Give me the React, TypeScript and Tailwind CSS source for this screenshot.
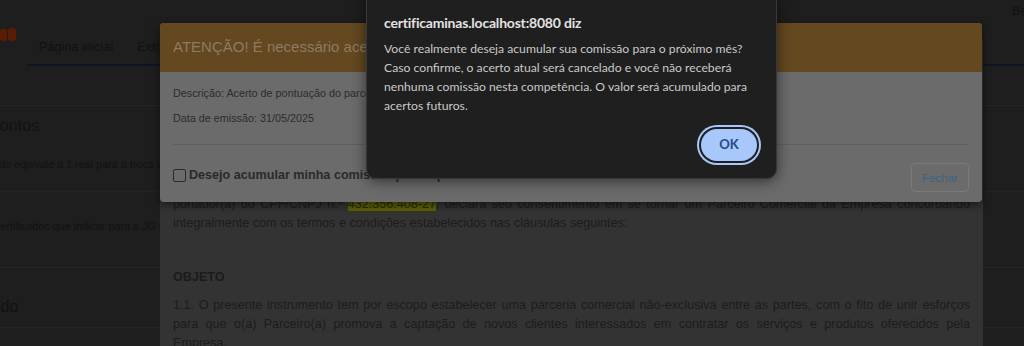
import React from "react";

const docLine = "[text-align-last:justify] text-justify whitespace-nowrap";

export default function App() {
  return (
    <div className="relative w-[1024px] h-[346px] overflow-hidden bg-[#1e1e1e] font-['Liberation_Sans',Arial,sans-serif]">
      {/* underlying page */}
      <div className="h-[22px] pl-[1012px] pt-[2px] text-[12.6px] leading-[18px] text-[#111] whitespace-nowrap">
        Bem-vindo
      </div>
      <div className="flex h-[44px]">
        <div className="w-[27px] pt-[6px]">
          <svg width="17" height="13" viewBox="0 0 17 13">
            <rect x="0" y="1" width="7" height="12" rx="2" fill="#5a1c02" />
            <rect x="8" y="0" width="8" height="13" rx="3" fill="#5a1c02" />
          </svg>
        </div>
        <nav className="flex flex-1 items-end border-b-2 border-[#0d1620] text-[12.6px] text-[#111]">
          <div className="px-[12px] pb-[8px] leading-[18px]">Página inicial</div>
          <div className="px-[12px] pb-[8px] leading-[18px]">Extrato</div>
        </nav>
      </div>
      <div className="h-[39px]" />
      <div className="border-t border-[#252525] h-[162px] text-[#121212] whitespace-nowrap">
        <div className="ml-[-11px] mt-[8px] text-[16.2px] leading-[22px]">Pontos</div>
        <div className="ml-[-1px] mt-[20px] text-[10.8px] leading-[16px]">do equivale a 1 real para a troca de pontos</div>
        <div className="mt-[19px] border-t border-[#222]" />
        <div className="ml-[-5px] mt-[26px] text-[10.8px] leading-[16px]">certificados que indicar para a JG Certificados</div>
      </div>
      <div className="border-t border-[#252525] h-[60px] text-[#121212] whitespace-nowrap">
        <div className="ml-[-23px] mt-[27px] text-[16.2px] leading-[22px]">Saldo</div>
      </div>
      <div className="border-t border-[#252525]" />

      {/* contract panel */}
      <div className="absolute left-[160px] top-[40px] w-[823px] h-[320px] bg-[#333333] px-[13px] pt-[155px] text-[12.6px] leading-[19px] text-[#1c1c1c]">
        <div className={docLine}>
          portador(a) do CPF/CNPJ n.º{" "}
          <span className="bg-[#5e5e06] text-[#2b2b00]">432.356.408-27</span>, declara seu consentimento em se tornar um Parceiro Comercial da Empresa concordando
        </div>
        <div>integralmente com os termos e condições estabelecidos nas cláusulas seguintes:</div>
        <div className="mt-[35px] font-bold leading-[19px]">OBJETO</div>
        <div className="mt-[9px]">
          <div className={docLine}>
            1.1. O presente instrumento tem por escopo estabelecer uma parceria comercial não-exclusiva entre as partes, com o fito de unir esforços
          </div>
          <div className={docLine}>
            para que o(a) Parceiro(a) promova a captação de novos clientes interessados em contratar os serviços e produtos oferecidos pela
          </div>
          <div>Empresa.</div>
        </div>
      </div>

      {/* main modal */}
      <div className="absolute left-[160px] top-[23px] w-[822px] h-[179px] overflow-hidden rounded-[4px] bg-[#6b6b6b] shadow-[0_3px_9px_rgba(0,0,0,0.5)]">
        <div className="flex h-[49px] items-center bg-[#634820] px-[13px] text-[15px] text-[#8c7b62] whitespace-nowrap">
          ATENÇÃO! É necessário aceitar o contrato para receber a comissão
        </div>
        <div className="px-[13px] text-[10.8px] leading-[16px] text-[#2c2c2c]">
          <div className="pt-[13px] whitespace-nowrap">Descrição: Acerto de pontuação do parceiro referente ao mês de maio</div>
          <div className="pt-[9px]">Data de emissão: 31/05/2025</div>
          <div className="mt-[18px] border-t border-[#5f5f5f]" />
          <div className="flex items-start justify-between pt-[18px]">
            <label className="mt-[4px] flex items-center gap-[3px] text-[12.6px] font-bold leading-[16px] text-[#2a2a2a] whitespace-nowrap">
              <span className="block h-[13px] w-[13px] rounded-[2px] border border-[#2b2b2b]" />
              Desejo acumular minha comissão para o próximo mês
            </label>
            <button className="h-[29px] w-[58px] rounded-[4px] border border-[#797979] text-[11.5px] text-[#3b6584]">
              Fechar
            </button>
          </div>
        </div>
      </div>

      {/* browser alert */}
      <div className="absolute left-[366px] top-[-10px] w-[411px] rounded-[10px] border border-[#383838] bg-[#1f1f1f] pt-[22px] pb-[17px] pl-[17px] pr-[18px] shadow-[0_2px_14px_rgba(0,0,0,0.55)] font-['Lato','Noto_Sans',sans-serif]">
        <div className="text-[14px] font-bold leading-[20px] tracking-[-0.2px] text-[#e3e3e3]">certificaminas.localhost:8080 diz</div>
        <div className="mt-[6px] text-[12.2px] leading-[19px] text-[#c9c9c9] whitespace-nowrap">
          <div>Você realmente deseja acumular sua comissão para o próximo mês?</div>
          <div>Caso confirme, o acerto atual será cancelado e você não receberá</div>
          <div>nenhuma comissão nesta competência. O valor será acumulado para</div>
          <div>acertos futuros.</div>
        </div>
        <div className="mt-[14px] flex justify-end pr-[1px]">
          <button className="h-[32px] w-[56px] rounded-full bg-[#a8c7fa] text-[13px] font-bold text-[#24488a] shadow-[0_0_0_2px_#1f1f1f,0_0_0_4px_#a8c7fa]">
            OK
          </button>
        </div>
      </div>
    </div>
  );
}
